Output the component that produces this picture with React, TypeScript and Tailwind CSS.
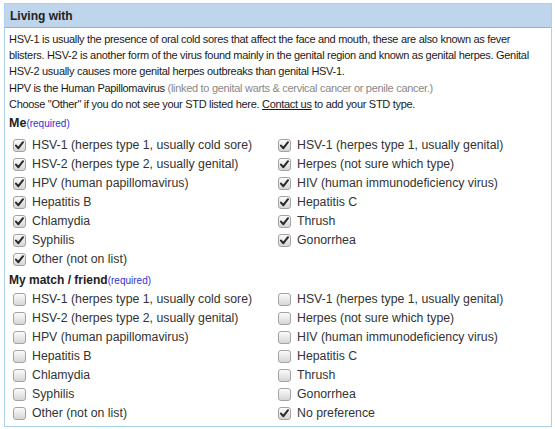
import React from "react";

const me: [string, boolean][][] = [
  [["HSV-1 (herpes type 1, usually cold sore)", true], ["HSV-1 (herpes type 1, usually genital)", true]],
  [["HSV-2 (herpes type 2, usually genital)", true], ["Herpes (not sure which type)", true]],
  [["HPV (human papillomavirus)", true], ["HIV (human immunodeficiency virus)", true]],
  [["Hepatitis B", true], ["Hepatitis C", true]],
  [["Chlamydia", true], ["Thrush", true]],
  [["Syphilis", true], ["Gonorrhea", true]],
  [["Other (not on list)", true]],
];

const match: [string, boolean][][] = [
  [["HSV-1 (herpes type 1, usually cold sore)", false], ["HSV-1 (herpes type 1, usually genital)", false]],
  [["HSV-2 (herpes type 2, usually genital)", false], ["Herpes (not sure which type)", false]],
  [["HPV (human papillomavirus)", false], ["HIV (human immunodeficiency virus)", false]],
  [["Hepatitis B", false], ["Hepatitis C", false]],
  [["Chlamydia", false], ["Thrush", false]],
  [["Syphilis", false], ["Gonorrhea", false]],
  [["Other (not on list)", false], ["No preference", true]],
];

function Box({ checked }: { checked: boolean }) {
  return (
    <span className="flex h-[13px] w-[13px] shrink-0 items-center justify-center rounded-[3px] border border-[#a3a3a3] bg-gradient-to-b from-[#fbfbfb] to-[#d6d6d6]">
      {checked && (
        <svg width="9" height="9" viewBox="0 0 9 9">
          <path d="M1 4.6 L3.4 7.2 L8 1.2" fill="none" stroke="#2a2a2a" strokeWidth="2" strokeLinecap="round" strokeLinejoin="round" />
        </svg>
      )}
    </span>
  );
}

function Options({ rows, className }: { rows: [string, boolean][][]; className: string }) {
  return (
    <div className={`flex flex-col ${className}`}>
      {rows.map((row, i) => (
        <div key={i} className="flex h-[19px] items-center">
          {row.map(([label, checked], j) => (
            <label key={j} className={`flex items-center gap-[6px] ${j === 0 ? "w-[269px] pl-[4px]" : ""}`}>
              <Box checked={checked} />
              <span className="text-[12.3px] text-[#333]">{label}</span>
            </label>
          ))}
        </div>
      ))}
    </div>
  );
}

export default function App() {
  return (
    <div className="h-[429px] w-[555px] bg-white pl-[4px] pt-[3px] font-['Liberation_Sans',Arial,sans-serif]">
      <div className="w-[548px] border border-[#a9d1ec]">
        <div className="flex h-[24px] items-center border-b border-[#82b5dc] bg-[#bed5ec] pl-[5px] text-[12px] font-bold text-[#222]">
          Living with
        </div>
        <div className="px-[4px] pb-[3px] pt-[3px]">
          <p className="text-[11px] leading-[16.2px] tracking-[-0.3px] text-[#1a1a1a]">
            HSV-1 is usually the presence of oral cold sores that affect the face and mouth, these are also known as fever
            blisters. HSV-2 is another form of the virus found mainly in the genital region and known as genital herpes. Genital
            HSV-2 usually causes more genital herpes outbreaks than genital HSV-1.
            <br />
            HPV is the Human Papillomavirus <span className="text-[#888]">(linked to genital warts &amp; cervical cancer or penile cancer.)</span>
            <br />
            Choose "Other" if you do not see your STD listed here. <a className="underline">Contact us</a> to add your STD type.
          </p>

          <div className="mt-[2px] flex items-baseline">
            <span className="text-[12.5px] font-bold text-[#222]">Me</span>
            <span className="text-[10px] text-[#3333cc]">(required)</span>
          </div>
          <Options rows={me} className="mt-[3px]" />

          <div className="mt-[2px] flex items-baseline">
            <span className="text-[12px] font-bold text-[#222]">My match / friend</span>
            <span className="text-[10px] text-[#3333cc]">(required)</span>
          </div>
          <Options rows={match} className="mt-[1px]" />
        </div>
      </div>
    </div>
  );
}
